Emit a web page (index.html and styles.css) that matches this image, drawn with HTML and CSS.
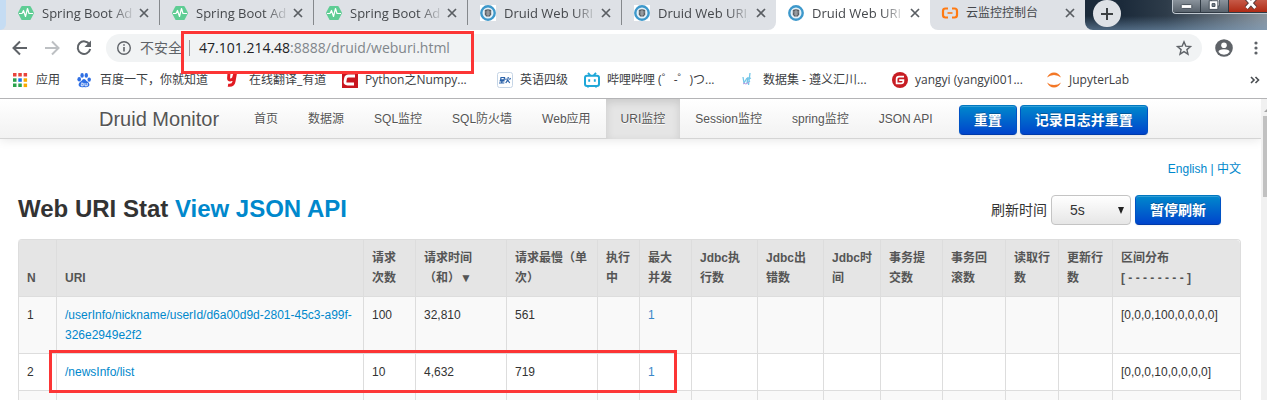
FILE: index.html
```html
<!DOCTYPE html>
<html lang="zh-CN">
<head>
<meta charset="utf-8">
<title>Druid Web URI Stat</title>
<link rel="stylesheet" href="styles.css">
</head>
<body>
<svg class="defs" width="0" height="0" aria-hidden="true">
  <symbol id="spring" viewBox="0 0 16 16"><path d="M4.300 1h7.400q.7 0 1 .6l3 5.600q.4.800 0 1.600l-3 5.600q-.3.600-1 .6H4.300q-.7 0-1-.6l-3-5.600q-.4-.8 0-1.600l3-5.600q.3-.6 1-.6z" fill="#5fcd94"/><path d="M1 8.500h3l1.500-3 2 6 2-8 1.500 5h4" fill="none" stroke="#fff" stroke-width="1.200" stroke-linejoin="round"/></symbol>
  <symbol id="druid" viewBox="0 0 16 16"><rect width="16" height="16" fill="#fff"/><circle cx="8" cy="8" r="6.700" fill="#e4f1f8" stroke="#3d98cb" stroke-width="2.400"/><path d="M4.800 5q3.200-1.500 6.400 0v4.500L9.800 11.600H6.200L4.800 9.500z" fill="#5a5f64"/><path d="M5.500 7h5M6 9h4M8 5v6" stroke="#b9bdc0" stroke-width=".8"/></symbol>
  <symbol id="close" viewBox="0 0 10 10"><path d="M1 1l8 8M9 1L1 9" stroke="#5a5e63" stroke-width="1.700"/></symbol>
</svg>

<header class="browser">
  <div class="strip">
    <div class="edge"></div>
    <div class="tabs">
      <div class="tab"><svg class="fav"><use href="#spring"/></svg><span class="tab-title">Spring Boot Ad</span><button class="tab-close" aria-label="关闭"><svg><use href="#close"/></svg></button></div>
      <div class="tab"><svg class="fav"><use href="#spring"/></svg><span class="tab-title">Spring Boot Ad</span><button class="tab-close" aria-label="关闭"><svg><use href="#close"/></svg></button></div>
      <div class="tab"><svg class="fav"><use href="#spring"/></svg><span class="tab-title">Spring Boot Ad</span><button class="tab-close" aria-label="关闭"><svg><use href="#close"/></svg></button></div>
      <div class="tab"><svg class="fav"><use href="#druid"/></svg><span class="tab-title">Druid Web URI</span><button class="tab-close" aria-label="关闭"><svg><use href="#close"/></svg></button></div>
      <div class="tab before-active"><svg class="fav"><use href="#druid"/></svg><span class="tab-title">Druid Web URI</span><button class="tab-close" aria-label="关闭"><svg><use href="#close"/></svg></button></div>
      <div class="tab active"><svg class="fav"><use href="#druid"/></svg><span class="tab-title">Druid Web URI</span><button class="tab-close" aria-label="关闭"><svg><use href="#close"/></svg></button></div>
      <div class="tab last"><svg class="fav" viewBox="0 0 16 16"><path d="M6 3.500H3.500Q1 3.500 1 6v4q0 2.500 2.500 2.500H6M10 3.500h2.500Q15 3.500 15 6v4q0 2.500-2.500 2.500H10" fill="none" stroke="#ff7a12" stroke-width="2.200"/><path d="M5.500 8h5" stroke="#ff7a12" stroke-width="1.600"/></svg><span class="tab-title full">云监控控制台</span><button class="tab-close" aria-label="关闭"><svg><use href="#close"/></svg></button></div>
    </div>
    <div class="frame">
      <button class="new-tab" aria-label="新标签页"><svg viewBox="0 0 14 14"><path d="M7 1v12M1 7h12" stroke="#3c4043" stroke-width="2"/></svg></button>
      <div class="win">
        <button class="win-btn" aria-label="最小化"><svg viewBox="0 0 28 13"><rect x="8.500" y="4.500" width="11" height="4" rx="1" fill="#fff" stroke="#444d57"/></svg></button>
        <button class="win-btn" aria-label="还原"><svg viewBox="0 0 28 13"><path d="M11-2h8v8h-8z" fill="#fff" stroke="#444d57"/><path d="M8.500.500h9v9h-9z" fill="#fff" stroke="#444d57"/><path d="M11.500 3.500h3v3h-3z" fill="#7b848e" stroke="#444d57"/></svg></button>
        <button class="win-btn win-close" aria-label="关闭窗口"><svg viewBox="0 0 39 13"><path d="M18-2l9 10M27-2l-9 10" stroke="#563a3a" stroke-width="5"/><path d="M18-2l9 10M27-2l-9 10" stroke="#fff" stroke-width="3"/></svg></button>
      </div>
    </div>
  </div>

  <div class="toolbar">
    <button class="tool" aria-label="后退"><svg viewBox="0 0 16 16"><path d="M15 8H2M8 1.500L1.500 8 8 14.500" fill="none" stroke="#5f6368" stroke-width="2"/></svg></button>
    <button class="tool" aria-label="前进"><svg viewBox="0 0 16 16"><path d="M1 8h13M8 1.500L14.500 8 8 14.500" fill="none" stroke="#bdc0c3" stroke-width="2"/></svg></button>
    <button class="tool" aria-label="重新加载"><svg viewBox="0 0 16 16"><path d="M13.500 4.500A6.300 6.300 0 1 0 14.200 9" fill="none" stroke="#5f6368" stroke-width="2"/><path d="M15 .500v6.500H8.500z" fill="#5f6368"/></svg></button>
    <div class="omnibox">
      <svg class="info" viewBox="0 0 16 16"><circle cx="8" cy="8" r="6.300" fill="none" stroke="#5f6368" stroke-width="1.400"/><path d="M8 7v4.500M8 4.200v1.600" stroke="#5f6368" stroke-width="1.600"/></svg>
      <span class="unsafe">不安全</span>
      <span class="divider"></span>
      <span class="url"><span class="host">47.101.214.48</span>:8888/druid/weburi.html</span>
      <button class="star" aria-label="添加书签"><svg viewBox="0 0 16 16"><path d="M8 1.800l1.800 4.300 4.700.4-3.600 3.100 1.100 4.600L8 11.700l-4 2.500 1.100-4.600-3.600-3.100 4.700-.4z" fill="none" stroke="#5f6368" stroke-width="1.400"/></svg></button>
      <div class="mark mark-url"></div>
    </div>
    <button class="tool user" aria-label="用户"><svg viewBox="0 0 18 18"><circle cx="9" cy="9" r="8.800" fill="#5f6368"/><circle cx="9" cy="6.300" r="2.800" fill="#fff"/><path d="M3.500 13q0-2.800 5.500-2.800t5.500 2.800Q12.500 15.800 9 15.800T3.500 13z" fill="#fff"/></svg></button>
    <button class="tool menu" aria-label="菜单"><svg viewBox="0 0 16 16"><circle cx="8" cy="3" r="1.600" fill="#5f6368"/><circle cx="8" cy="8" r="1.600" fill="#5f6368"/><circle cx="8" cy="13" r="1.600" fill="#5f6368"/></svg></button>
  </div>

  <nav class="bookmarks" aria-label="书签">
    <a href="#"><svg viewBox="0 0 16 16"><path d="M0 1h3.500v3.500H0zM5.300 1h3.500v3.500H5.300zM10.600 1h3.500v3.500h-3.500z" fill="#e8453c"/><path d="M0 6.300h3.500v3.500H0z" fill="#2ba24c"/><path d="M5.300 6.300h3.500v3.500H5.300z" fill="#1a73e8"/><path d="M10.600 6.300h3.500v3.500h-3.500z" fill="#f9ab00"/><path d="M0 11.600h3.500v3.500H0zM5.300 11.600h3.500v3.500H5.300z" fill="#2ba24c"/><path d="M10.600 11.600h3.500v3.500h-3.500z" fill="#f9ab00"/></svg>应用</a>
    <a href="#"><svg viewBox="0 0 16 16"><g fill="#2f6fe4"><ellipse cx="2.200" cy="7.300" rx="1.800" ry="2.300"/><ellipse cx="5.100" cy="3.400" rx="1.700" ry="2.400"/><ellipse cx="9.300" cy="3.400" rx="1.700" ry="2.400"/><ellipse cx="12.200" cy="7.600" rx="1.700" ry="2.200"/><path d="M7 7q1.300 0 2.600 2 3.400 2.200 2.700 4.600-.8 2.200-5.300 1.500-4.500.7-5.300-1.500-.7-2.400 2.700-4.600Q5.700 7 7 7z"/></g><path d="M4 11.200h2.200v2.600H4.300v-1.600M8 11v2.800h2.200V11" fill="none" stroke="#fff" stroke-width=".9"/></svg>百度一下，你就知道</a>
    <a href="#"><svg viewBox="0 0 16 16"><path d="M3 1L2.600 6q-.1 2 1.600 2 2 0 3.400-2L9 1M9.500 1L8 9.500Q7.200 14 2 13.200" fill="none" stroke="#e11b22" stroke-width="3"/></svg>在线翻译_有道</a>
    <a href="#"><svg viewBox="0 0 16 16"><path d="M0 0h16v16H0z" fill="#c9151e"/><path d="M13 4H6.500Q4 4 3.500 6.500L3 9.500Q2.800 12 5.500 12H12" fill="none" stroke="#fff" stroke-width="2.800"/></svg>Python之Numpy...</a>
    <a href="#"><svg viewBox="0 0 16 16"><rect x=".5" y=".5" width="15" height="15" rx="2" fill="#fff" stroke="#c5d5e6"/><path d="M4 5.500h3.500l-.4 2.300H3.600zM2.500 9h5M2 11h5.300M5.300 8l-.7 3M11.300 5l-.6 3-2 3M10.700 8l2 3M9.200 6.500L8.800 8M13.500 6l-1 1.600" fill="none" stroke="#2860a8" stroke-width="1.200"/></svg>英语四级</a>
    <a href="#"><svg viewBox="0 0 16 16"><rect x="1" y="3.700" width="14" height="10.300" rx="2" fill="none" stroke="#1ea7d8" stroke-width="2"/><path d="M4 .800l2.200 2.500M12 .800L9.800 3.300M5.200 7.300v2.500M10.800 7.300v2.500M4 14v1.500M12 14v1.500" stroke="#1ea7d8" stroke-width="1.900"/></svg>哔哩哔哩 (゜-゜)つ...</a>
    <a href="#"><svg viewBox="0 0 16 16"><path d="M3 5l1 6 3-5M8 5l-1 6 3-2M10 1L8.500 13M7.500 7.500L11 6" fill="none" stroke="#72c6e8" stroke-width="1.300"/><path d="M3 11l3 1 3-2" fill="none" stroke="#b99be0"/></svg>数据集 - 遵义汇川...</a>
    <a href="#"><svg viewBox="0 0 16 16"><circle cx="8" cy="8" r="8" fill="#c71d23"/><path d="M12 4.600H7Q4.600 4.600 4.600 7v4.400H9q2.400 0 2.400-2.400v-.8H7.200" fill="none" stroke="#fff" stroke-width="1.700"/></svg>yangyi (yangyi001...</a>
    <a href="#"><svg viewBox="0 0 16 16"><path d="M1 5.500Q3.500.500 8 .500t7 5Q12 3 8 3T1 5.500zM1 10.500Q3.500 15.500 8 15.500t7-5Q12 13 8 13t-7-2.500z" fill="#f37726"/></svg>JupyterLab</a>
    <button class="more" aria-label="更多书签"><svg viewBox="0 0 10 8"><path d="M1 1l3 3-3 3M5.500 1l3 3-3 3" fill="none" stroke="#4a4e52" stroke-width="1.600"/></svg></button>
  </nav>
</header>

<div class="viewport">
  <div class="page">
    <nav class="navbar">
      <a class="brand" href="#">Druid Monitor</a>
      <ul class="nav">
        <li><a href="#">首页</a></li>
        <li><a href="#">数据源</a></li>
        <li><a href="#">SQL监控</a></li>
        <li><a href="#">SQL防火墙</a></li>
        <li><a href="#">Web应用</a></li>
        <li class="current"><a href="#">URI监控</a></li>
        <li><a href="#">Session监控</a></li>
        <li><a href="#">spring监控</a></li>
        <li><a href="#">JSON API</a></li>
      </ul>
      <div class="actions">
        <button class="btn">重置</button>
        <button class="btn">记录日志并重置</button>
      </div>
    </nav>

    <main class="content">
      <div class="lang"><a href="#">English</a> | <a href="#">中文</a></div>
      <div class="heading">
        <h3>Web URI Stat <a href="#">View JSON API</a></h3>
        <div class="refresh">
          <label for="interval">刷新时间</label>
          <div class="select-wrap">
            <select id="interval"><option>5s</option><option>10s</option><option>20s</option><option>30s</option><option>60s</option></select>
          </div>
          <button class="btn">暂停刷新</button>
        </div>
      </div>

      <div class="table-wrap">
        <table>
          <colgroup>
            <col class="c-n"><col><col class="c-52"><col class="c-91"><col class="c-91"><col class="c-42"><col class="c-52"><col class="c-66"><col class="c-66"><col class="c-57"><col class="c-62"><col class="c-63"><col class="c-53"><col class="c-54"><col class="c-hist">
          </colgroup>
          <thead>
            <tr><th>N</th><th>URI</th><th>请求<br>次数</th><th>请求时间<br>（和）▼</th><th>请求最慢（单<br>次）</th><th>执行<br>中</th><th>最大<br>并发</th><th>Jdbc执<br>行数</th><th>Jdbc出<br>错数</th><th>Jdbc时<br>间</th><th>事务提<br>交数</th><th>事务回<br>滚数</th><th>读取行<br>数</th><th>更新行<br>数</th><th>区间分布<br>[ - - - - - - - - ]</th></tr>
          </thead>
          <tbody>
            <tr><td>1</td><td><a href="#">/userInfo/nickname/userId/d6a00d9d-2801-45c3-a99f-326e2949e2f2</a></td><td>100</td><td>32,810</td><td>561</td><td></td><td class="peak">1</td><td></td><td></td><td></td><td></td><td></td><td></td><td></td><td>[0,0,0,100,0,0,0,0]</td></tr>
            <tr><td>2</td><td><a href="#">/newsInfo/list</a></td><td>10</td><td>4,632</td><td>719</td><td></td><td class="peak">1</td><td></td><td></td><td></td><td></td><td></td><td></td><td></td><td>[0,0,0,10,0,0,0,0]</td></tr>
            <tr class="next"><td></td><td></td><td></td><td></td><td></td><td></td><td></td><td></td><td></td><td></td><td></td><td></td><td></td><td></td><td></td></tr>
          </tbody>
        </table>
        <div class="mark mark-row"></div>
      </div>
    </main>
  </div>
  <div class="scrollbar"><div class="arrow"></div><div class="thumb"></div></div>
</div>
</body>
</html>
```
FILE: styles.css
```css
* { box-sizing: border-box; }

body {
  margin: 0;
  height: 100vh;
  display: flex;
  flex-direction: column;
  overflow: hidden;
  background: #fff;
  color: #333;
  font: 12px/20px "Liberation Sans", "Noto Sans CJK SC", sans-serif;
}

button {
  margin: 0;
  padding: 0;
  border: 0;
  background: none;
  font: inherit;
}

svg { display: block; overflow: visible; }
a { color: #0088cc; text-decoration: none; }
.defs { position: absolute; }

/* Browser chrome */
.browser {
  flex: none;
  border-bottom: 1px solid #b4b4b6;
  font-family: "Open Sans", "Noto Sans CJK SC", sans-serif;
}

.strip { display: flex; height: 30px; background: #dee1e6; }
.edge { width: 6px; background: #c5dcf3; border-bottom-right-radius: 6px; }
.tabs { display: flex; background: #fff; }

.tab {
  width: 154px;
  display: flex;
  align-items: center;
  padding: 0 10px 4px 12px;
  background: #dee1e6;
  border-right: 1px solid #85888c;
  border-image: linear-gradient(#85888c 24px, transparent 24px) 1;
  color: #45484c;
  font-size: 13px;
}
.tab.before-active { border: 0; border-bottom-right-radius: 8px; }
.tab.active { border: 0; background: #fff; }
.tab.last { width: 155px; border: 0; border-bottom-left-radius: 8px; }
.fav { flex: none; width: 16px; height: 16px; }
.tab-title {
  flex: 1;
  margin-left: 8px;
  white-space: nowrap;
  mask-image: linear-gradient(to right, #000 70px, transparent 94px);
}
.tab-title.full { mask-image: none; font-size: 12px; }
.tab-close svg { width: 10px; height: 10px; }

.frame {
  flex: 1;
  display: flex;
  justify-content: space-between;
  align-items: flex-start;
  padding-left: 8px;
  border-bottom-left-radius: 8px;
  background: linear-gradient(transparent 16px, #7d9fbf88), linear-gradient(to right, #1b2a3a 20%, #2e3c4a 45%, #8a949d);
  overflow: hidden;
}
.new-tab {
  display: grid;
  place-items: center;
  width: 28px;
  height: 27px;
  border-radius: 14px;
  background: #dee1e6;
}
.new-tab svg { width: 14px; height: 14px; }
.win {
  display: flex;
  height: 14px;
  border: 1px solid #c0c8d0;
  border-top: 0;
  border-right: 0;
  border-bottom-left-radius: 4px;
  background: #303a44;
  overflow: hidden;
}
.win-btn { width: 28px; height: 12px; background: linear-gradient(#8a939c, #59636d); border-right: 1px solid #303a44; overflow: hidden; }
.win-btn svg { width: 100%; height: 13px; }
.win-close { width: 38px; border: 0; background: linear-gradient(#c65a48, #b02a14); }

.toolbar { display: flex; align-items: center; height: 36px; padding: 0 3px 0 12px; }
.tool { width: 16px; margin-right: 16px; }
.tool svg { width: 16px; height: 16px; }
.omnibox {
  position: relative;
  flex: 1;
  display: flex;
  align-items: center;
  height: 28px;
  margin-right: 13px;
  margin-left: -2px;
  padding: 0 10px;
  border-radius: 14px;
  background: #f1f3f4;
  font-size: 14px;
}
.info { width: 16px; height: 16px; }
.unsafe { margin-left: 8px; color: #5f6368; }
.divider { width: 1px; height: 16px; margin: 0 9px 0 7px; background: #9a9da1; }
.url { color: #80868b; }
.host { color: #202124; }
.star { margin-left: auto; }
.star svg { width: 16px; height: 16px; }
.user { width: 18px; margin-right: 15px; }
.user svg { width: 18px; height: 18px; }
.menu { margin-right: 0; }

.bookmarks {
  display: grid;
  grid-template-columns: 64px 149px 116px 155px 87px 156px 152px 154px 1fr auto;
  align-items: center;
  height: 32px;
  padding: 0 7px 4px 13px;
}
.bookmarks a { display: flex; align-items: center; gap: 7px; color: #3c4043; white-space: nowrap; }
.bookmarks a svg { width: 16px; height: 16px; flex: none; }
.more svg { width: 10px; height: 8px; }

/* Highlight frames */
.mark { position: absolute; border: 3px solid #fc3535; pointer-events: none; }
.mark-url { left: 75px; top: -3px; width: 293px; height: 43px; }
.mark-row { left: 31px; top: 111px; width: 628px; height: 43px; }

/* Page */
.viewport { flex: 1; min-height: 0; display: flex; }
.page { flex: 1; min-width: 0; overflow: hidden; }

.navbar {
  display: flex;
  height: 40px;
  padding-left: 79px;
  border-bottom: 1px solid #d4d4d4;
  background: linear-gradient(#fff, #f2f2f2);
  box-shadow: 0 1px 10px rgba(0, 0, 0, .1);
  text-shadow: 0 1px 0 #fff;
}
.brand { padding: 10px 20px; color: #555; font-size: 20px; white-space: nowrap; }
.nav { display: flex; margin: 0; padding: 0; list-style: none; }
.nav a { display: block; height: 40px; padding: 10px 15px; color: #555; white-space: nowrap; }
.nav .current a { background: #e5e5e5; box-shadow: inset 0 3px 8px rgba(0, 0, 0, .125); }
.actions { display: flex; gap: 3px; margin: 6px 0 0 11px; }

.btn {
  height: 30px;
  padding: 4px 14px;
  border: 1px solid;
  border-color: #0077c0 #0052c4 #003aa8;
  border-radius: 4px;
  background: linear-gradient(#0088cc, #0044cc);
  box-shadow: inset 0 1px 0 rgba(255, 255, 255, .2), 0 1px 2px rgba(0, 0, 0, .05);
  color: #fff;
  font-size: 14px;
  font-weight: 700;
  line-height: 20px;
  text-shadow: 0 -1px 0 rgba(0, 0, 0, .25);
  white-space: nowrap;
}

.content { padding: 20px 20px 0 18px; }
.lang { color: #0088cc; text-align: right; }
.heading { display: flex; justify-content: space-between; align-items: center; margin-top: 16px; padding-right: 20px; }
h3 { margin: 0; padding-bottom: 2px; font-size: 24px; line-height: 28px; }
.refresh { display: flex; align-items: center; gap: 4px; font-size: 14px; }
.select-wrap { position: relative; }
.select-wrap::after {
  content: "";
  position: absolute;
  right: 7px;
  top: 12px;
  border: 3px solid transparent;
  border-top: 7px solid #222;
  border-bottom: 0;
}
select {
  display: block;
  appearance: none;
  width: 80px;
  height: 30px;
  padding: 0 18px;
  border: 1px solid #c4c4c4;
  border-radius: 4px;
  background: linear-gradient(#fff, #e6e6e6);
  color: #333;
  font: inherit;
}

.table-wrap { position: relative; margin-top: 14px; }
table {
  width: 100%;
  table-layout: fixed;
  border: 1px solid #ddd;
  border-left: 0;
  border-radius: 4px;
  border-spacing: 0;
}
th, td {
  padding: 8px;
  border-left: 1px solid #ddd;
  text-align: left;
  vertical-align: top;
}
th { background: #e5e5e5; color: #555; vertical-align: bottom; white-space: nowrap; }
th:first-child { border-top-left-radius: 4px; }
th:last-child { border-top-right-radius: 4px; }
td { border-top: 1px solid #ddd; }
tbody tr:nth-child(odd) td { background: #f9f9f9; }
tbody .peak { color: #3a87c8; }
.next td { height: 37px; }
.c-n { width: 38px; }
.c-42 { width: 42px; }
.c-52 { width: 52px; }
.c-53 { width: 53px; }
.c-54 { width: 54px; }
.c-57 { width: 57px; }
.c-62 { width: 62px; }
.c-63 { width: 63px; }
.c-66 { width: 66px; }
.c-91 { width: 91px; }
.c-hist { width: 128px; }

.scrollbar { width: 6px; background: #f1f1f1; overflow: hidden; }
.arrow { height: 17px; padding: 9px 0 0 3px; }
.arrow::before { content: ""; display: block; width: 0; border: 4px solid transparent; border-top: 0; border-bottom: 4px solid #a3a3a3; }
.thumb { height: 81px; margin-left: 2px; background: #c1c1c1; }
```
